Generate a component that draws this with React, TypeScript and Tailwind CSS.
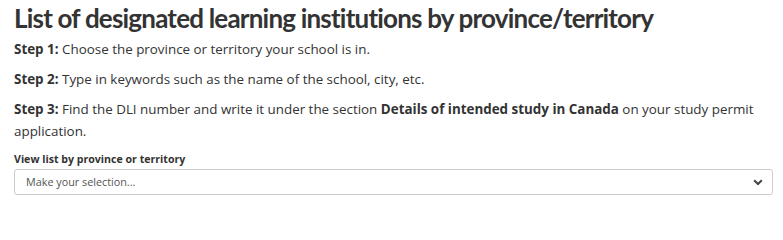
import React from "react";

export default function App() {
  return (
    <div className="w-[783px] h-[208px] bg-white pl-[14px] pr-[10px] pt-[1px] overflow-hidden text-[#333]" style={{ fontFamily: '"Open Sans", "Noto Sans", sans-serif' }}>
      <h1 className="text-[26px] leading-[34px] font-bold tracking-[-0.8px] mb-[3px] whitespace-nowrap" style={{ fontFamily: 'Lato, "Noto Sans", sans-serif' }}>
        List of designated learning institutions by province/territory
      </h1>
      <p className="text-[13.4px] leading-[22px] mb-[8px]"><strong>Step 1:</strong> Choose the province or territory your school is in.</p>
      <p className="text-[13.4px] leading-[22px] mb-[8px]"><strong>Step 2:</strong> Type in keywords such as the name of the school, city, etc.</p>
      <p className="text-[13.4px] leading-[22px] mb-[9px]"><strong>Step 3:</strong> Find the DLI number and write it under the section <strong>Details of intended study in Canada</strong> on your study permit application.</p>
      <div className="text-[10.6px] font-bold leading-[16px] mb-[2px]">View list by province or territory</div>
      <div className="h-[26px] border border-[#ccc] rounded-[3px] flex items-center justify-between pl-[11px] pr-[8px]">
        <span className="text-[10.8px] text-[#555]">Make your selection...</span>
        <svg width="10" height="7" viewBox="0 0 10 7" className="mr-[1px]">
          <path d="M1.2 1.2 L5 5 L8.8 1.2" fill="none" stroke="#444" strokeWidth="2" />
        </svg>
      </div>
    </div>
  );
}
